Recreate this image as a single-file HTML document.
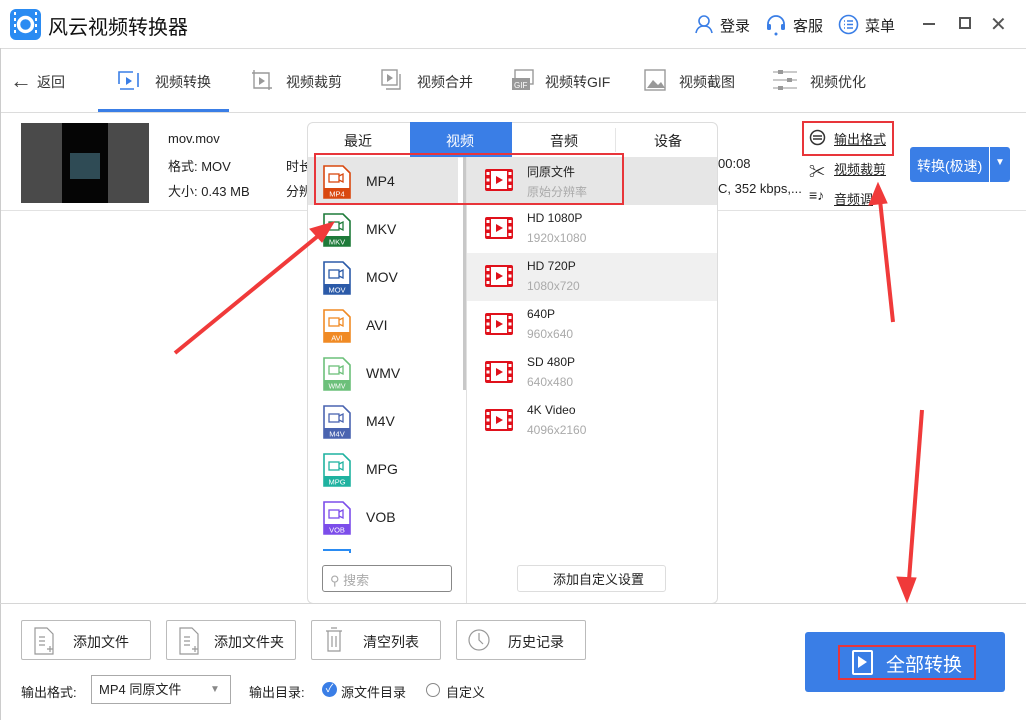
<!DOCTYPE html>
<html><head><meta charset="utf-8"><style>
*{margin:0;padding:0;box-sizing:border-box}
body{width:1026px;height:720px;position:relative;background:#fff;font-family:"Liberation Sans","Noto Sans CJK SC",sans-serif;color:#222;overflow:hidden}
.a{position:absolute;white-space:nowrap}
.hl{position:absolute;left:0;width:1026px;height:1px;background:#dcdcdc}
.nav{font-size:14px;color:#333;top:72px}
.fi{position:absolute;left:323px;width:28px;height:34px}
.fl{position:absolute;left:366px;font-size:14px;color:#222}
.rv{position:absolute;left:485px;width:28px;height:22px}
.rt{position:absolute;left:527px;font-size:12px;color:#222}
.rs{position:absolute;left:527px;font-size:12px;color:#aaa}
.btn{position:absolute;top:620px;width:130px;height:40px;border:1px solid #bbb;border-radius:2px;font-size:14px;color:#222}
</style></head><body>
<!-- title -->
<svg class="a" style="left:10px;top:9px" width="31" height="31" viewBox="0 0 31 31"><rect width="31" height="31" rx="6" fill="#2a8bf2"/><rect x="4" y="3" width="2" height="3" fill="#fff"/><rect x="4" y="9" width="2" height="3" fill="#fff"/><rect x="4" y="15" width="2" height="3" fill="#fff"/><rect x="4" y="21" width="2" height="3" fill="#fff"/><rect x="25" y="3" width="2" height="3" fill="#fff"/><rect x="25" y="9" width="2" height="3" fill="#fff"/><rect x="25" y="15" width="2" height="3" fill="#fff"/><rect x="25" y="21" width="2" height="3" fill="#fff"/><circle cx="15.5" cy="15.5" r="7" fill="none" stroke="#fff" stroke-width="3.5"/></svg>
<div class="a" style="left:48px;top:11px;font-size:20px;color:#111">风云视频转换器</div>
<svg class="a" style="left:694px;top:14px" width="20" height="20" viewBox="0 0 20 20"><circle cx="10" cy="7" r="5" fill="none" stroke="#3a7ee6" stroke-width="1.6"/><path d="M2 19c1-5 4-7 8-7s7 2 8 7" fill="none" stroke="#3a7ee6" stroke-width="1.6"/></svg>
<div class="a" style="left:720px;top:15px;font-size:15px">登录</div>
<svg class="a" style="left:765px;top:14px" width="22" height="22" viewBox="0 0 22 22"><path d="M3 13V10a8 8 0 0 1 16 0v3" fill="none" stroke="#3a7ee6" stroke-width="1.8"/><rect x="2" y="10" width="4" height="6" rx="1.5" fill="#3a7ee6"/><rect x="16" y="10" width="4" height="6" rx="1.5" fill="#3a7ee6"/><circle cx="11" cy="20" r="1.5" fill="#3a7ee6"/></svg>
<div class="a" style="left:793px;top:15px;font-size:15px">客服</div>
<svg class="a" style="left:838px;top:14px" width="21" height="21" viewBox="0 0 21 21"><circle cx="10.5" cy="10.5" r="9" fill="none" stroke="#3a7ee6" stroke-width="1.6"/><path d="M6 7h1M9 7h6M6 10.5h1M9 10.5h6M6 14h1M9 14h6" stroke="#3a7ee6" stroke-width="1.6"/></svg>
<div class="a" style="left:865px;top:15px;font-size:15px">菜单</div>
<div class="a" style="left:923px;top:23px;width:12px;height:2px;background:#555"></div>
<div class="a" style="left:959px;top:17px;width:12px;height:12px;border:2px solid #555"></div>
<div class="a" style="left:990px;top:12px;font-size:20px;color:#555">✕</div>
<div class="hl" style="top:48px"></div>
<!-- nav -->
<div class="a" style="left:10px;top:68px;font-size:22px;color:#444">←</div>
<div class="a nav" style="left:37px">返回</div>
<svg class="a" style="left:117px;top:68px" width="24" height="26" viewBox="0 0 24 26"><rect x="2" y="4" width="19" height="17" fill="none" stroke="#3a7ee6" stroke-width="1.6" stroke-dasharray="14 6"/><path d="M9 9l6 4-6 4z" fill="#3a7ee6"/></svg>
<div class="a nav" style="left:155px">视频转换</div>
<div class="a" style="left:98px;top:109px;width:131px;height:3px;background:#3a7ee6"></div>
<svg class="a" style="left:250px;top:68px" width="24" height="26" viewBox="0 0 24 26"><path d="M4 2v18h18M2 5h17v17" fill="none" stroke="#999" stroke-width="1.4"/><path d="M9 9l6 4-6 4z" fill="#999"/></svg>
<div class="a nav" style="left:286px">视频裁剪</div>
<svg class="a" style="left:380px;top:68px" width="24" height="26" viewBox="0 0 24 26"><rect x="2" y="2" width="15" height="15" fill="none" stroke="#999" stroke-width="1.4"/><path d="M20 6v15H6" fill="none" stroke="#999" stroke-width="1.4"/><path d="M7 6l6 4-6 4z" fill="#999"/></svg>
<div class="a nav" style="left:417px">视频合并</div>
<svg class="a" style="left:511px;top:68px" width="26" height="26" viewBox="0 0 26 26"><rect x="4" y="2" width="18" height="14" fill="none" stroke="#999" stroke-width="1.4"/><rect x="1" y="10" width="18" height="12" fill="#999"/><text x="3" y="20" font-size="8" fill="#fff" font-family="Liberation Sans">GIF</text></svg>
<div class="a nav" style="left:545px">视频转GIF</div>
<svg class="a" style="left:643px;top:68px" width="24" height="26" viewBox="0 0 24 26"><rect x="2" y="2" width="20" height="20" fill="none" stroke="#999" stroke-width="1.4"/><path d="M4 20l6-8 5 5 3-3 4 6" fill="#999"/></svg>
<div class="a nav" style="left:679px">视频截图</div>
<svg class="a" style="left:772px;top:68px" width="26" height="24" viewBox="0 0 26 24"><path d="M1 4h24M1 12h24M1 20h24" stroke="#aaa" stroke-width="1.2"/><rect x="6" y="2" width="5" height="4" fill="#999"/><rect x="15" y="10" width="5" height="4" fill="#999"/><rect x="6" y="18" width="5" height="4" fill="#999"/></svg>
<div class="a nav" style="left:810px">视频优化</div>
<div class="hl" style="top:112px"></div>
<!-- file row -->
<div class="a" style="left:21px;top:123px;width:128px;height:80px;background:#4a4a4a"></div>
<div class="a" style="left:62px;top:123px;width:46px;height:80px;background:#050505"></div>
<div class="a" style="left:70px;top:153px;width:30px;height:26px;background:#2f4b55"></div>
<div class="a" style="left:168px;top:131px;font-size:13px">mov.mov</div>
<div class="a" style="left:168px;top:156px;font-size:13px">格式: MOV</div>
<div class="a" style="left:168px;top:181px;font-size:13px">大小: 0.43 MB</div>
<div class="a" style="left:286px;top:156px;font-size:13px">时长</div>
<div class="a" style="left:286px;top:181px;font-size:13px">分辨</div>
<div class="a" style="left:718px;top:156px;font-size:13px">00:08</div>
<div class="a" style="left:718px;top:181px;font-size:13px">C, 352 kbps,...</div>
<svg class="a" style="left:809px;top:129px" width="17" height="17" viewBox="0 0 17 17"><circle cx="8.5" cy="8.5" r="7" fill="none" stroke="#333" stroke-width="1.5"/><path d="M4 7h9M4 10h9" stroke="#333" stroke-width="1.5"/></svg>
<div class="a" style="left:834px;top:129px;font-size:13px;text-decoration:underline">输出格式</div>
<div class="a" style="left:809px;top:158px;font-size:16px">✂</div>
<div class="a" style="left:834px;top:159px;font-size:13px;text-decoration:underline">视频裁剪</div>
<div class="a" style="left:809px;top:187px;font-size:14px">≡♪</div>
<div class="a" style="left:834px;top:189px;font-size:13px;text-decoration:underline">音频调</div>
<div class="a" style="left:802px;top:121px;width:92px;height:35px;border:2px solid #e8353a"></div>
<div class="a" style="left:910px;top:147px;width:100px;height:35px;background:#3a7ee6;border-radius:3px"></div>
<div class="a" style="left:917px;top:156px;font-size:14px;color:#fff">转换(极速)</div>
<div class="a" style="left:989px;top:147px;width:1px;height:35px;background:#fff"></div>
<div class="a" style="left:995px;top:157px;font-size:10px;color:#fff">▼</div>
<div class="hl" style="top:210px;background:#e2e2e2"></div>
<div class="a" style="left:0;top:48px;width:1px;height:672px;background:#ccc"></div>
<!-- popup -->
<div class="a" style="left:307px;top:122px;width:411px;height:482px;background:#fff;border:1px solid #ddd;border-radius:6px"></div>
<div class="a" style="left:410px;top:122px;width:102px;height:35px;background:#3a7ee6"></div>
<div class="a" style="left:344px;top:131px;font-size:14px">最近</div>
<div class="a" style="left:446px;top:131px;font-size:14px;color:#fff">视频</div>
<div class="a" style="left:550px;top:131px;font-size:14px">音频</div>
<div class="a" style="left:654px;top:131px;font-size:14px">设备</div>
<div class="a" style="left:615px;top:128px;width:1px;height:24px;background:#e5e5e5"></div>
<div class="a" style="left:308px;top:157px;width:409px;height:1px;background:#eee"></div>
<div class="a" style="left:466px;top:157px;width:1px;height:446px;background:#e0e0e0"></div>
<div class="a" style="left:463px;top:157px;width:3px;height:233px;background:#c8c8c8"></div>
<div class="a" style="left:308px;top:157px;width:150px;height:48px;background:#e6e6e6"></div>
<div class="a" style="left:467px;top:157px;width:250px;height:48px;background:#e6e6e6"></div>
<div class="a" style="left:467px;top:253px;width:250px;height:48px;background:#f0f0f0"></div>
<svg width="0" height="0" style="position:absolute"><defs>
<symbol id="cam" viewBox="0 0 28 34"><rect x="6" y="8" width="10" height="8" fill="none" stroke="#fff" stroke-width="1.3"/><path d="M16 10l4-2v8l-4-2" fill="none" stroke="#fff" stroke-width="1.3"/></symbol>
<symbol id="film" viewBox="0 0 28 22"><rect x="0" y="0" width="28" height="22" rx="2" fill="#e0111b"/><rect x="6" y="2" width="16" height="18" fill="#fff"/><path d="M11 7l7 4-7 4z" fill="#e0111b"/><rect x="1.5" y="3" width="3" height="3" fill="#fff"/><rect x="1.5" y="9.5" width="3" height="3" fill="#fff"/><rect x="1.5" y="16" width="3" height="3" fill="#fff"/><rect x="23.5" y="3" width="3" height="3" fill="#fff"/><rect x="23.5" y="9.5" width="3" height="3" fill="#fff"/><rect x="23.5" y="16" width="3" height="3" fill="#fff"/></symbol>
</defs></svg>
<!-- file icons -->
<svg class="fi" style="top:165px" viewBox="0 0 28 34"><path d="M1 1h19l7 7v25H1z" fill="#fff" stroke="#d9480f" stroke-width="1.6"/><rect x="1" y="23" width="26" height="10" fill="#d9480f"/><rect x="6" y="9" width="10" height="8" fill="none" stroke="#d9480f" stroke-width="1.3"/><path d="M16 11l4-2v8l-4-2" fill="none" stroke="#d9480f" stroke-width="1.3"/><text x="14" y="31.5" font-size="7.5" fill="#fff" text-anchor="middle" font-family="Liberation Sans">MP4</text></svg>
<svg class="fi" style="top:213px" viewBox="0 0 28 34"><path d="M1 1h19l7 7v25H1z" fill="#fff" stroke="#1e7b3a" stroke-width="1.6"/><rect x="1" y="23" width="26" height="10" fill="#1e7b3a"/><rect x="6" y="9" width="10" height="8" fill="none" stroke="#1e7b3a" stroke-width="1.3"/><path d="M16 11l4-2v8l-4-2" fill="none" stroke="#1e7b3a" stroke-width="1.3"/><text x="14" y="31.5" font-size="7.5" fill="#fff" text-anchor="middle" font-family="Liberation Sans">MKV</text></svg>
<svg class="fi" style="top:261px" viewBox="0 0 28 34"><path d="M1 1h19l7 7v25H1z" fill="#fff" stroke="#2b5aa8" stroke-width="1.6"/><rect x="1" y="23" width="26" height="10" fill="#2b5aa8"/><rect x="6" y="9" width="10" height="8" fill="none" stroke="#2b5aa8" stroke-width="1.3"/><path d="M16 11l4-2v8l-4-2" fill="none" stroke="#2b5aa8" stroke-width="1.3"/><text x="14" y="31.5" font-size="7.5" fill="#fff" text-anchor="middle" font-family="Liberation Sans">MOV</text></svg>
<svg class="fi" style="top:309px" viewBox="0 0 28 34"><path d="M1 1h19l7 7v25H1z" fill="#fff" stroke="#f08a24" stroke-width="1.6"/><rect x="1" y="23" width="26" height="10" fill="#f08a24"/><rect x="6" y="9" width="10" height="8" fill="none" stroke="#f08a24" stroke-width="1.3"/><path d="M16 11l4-2v8l-4-2" fill="none" stroke="#f08a24" stroke-width="1.3"/><text x="14" y="31.5" font-size="7.5" fill="#fff" text-anchor="middle" font-family="Liberation Sans">AVI</text></svg>
<svg class="fi" style="top:357px" viewBox="0 0 28 34"><path d="M1 1h19l7 7v25H1z" fill="#fff" stroke="#6cc07a" stroke-width="1.6"/><rect x="1" y="23" width="26" height="10" fill="#6cc07a"/><rect x="6" y="9" width="10" height="8" fill="none" stroke="#6cc07a" stroke-width="1.3"/><path d="M16 11l4-2v8l-4-2" fill="none" stroke="#6cc07a" stroke-width="1.3"/><text x="14" y="31.5" font-size="7" fill="#fff" text-anchor="middle" font-family="Liberation Sans">WMV</text></svg>
<svg class="fi" style="top:405px" viewBox="0 0 28 34"><path d="M1 1h19l7 7v25H1z" fill="#fff" stroke="#4a64b0" stroke-width="1.6"/><rect x="1" y="23" width="26" height="10" fill="#4a64b0"/><rect x="6" y="9" width="10" height="8" fill="none" stroke="#4a64b0" stroke-width="1.3"/><path d="M16 11l4-2v8l-4-2" fill="none" stroke="#4a64b0" stroke-width="1.3"/><text x="14" y="31.5" font-size="7.5" fill="#fff" text-anchor="middle" font-family="Liberation Sans">M4V</text></svg>
<svg class="fi" style="top:453px" viewBox="0 0 28 34"><path d="M1 1h19l7 7v25H1z" fill="#fff" stroke="#1fb2a0" stroke-width="1.6"/><rect x="1" y="23" width="26" height="10" fill="#1fb2a0"/><rect x="6" y="9" width="10" height="8" fill="none" stroke="#1fb2a0" stroke-width="1.3"/><path d="M16 11l4-2v8l-4-2" fill="none" stroke="#1fb2a0" stroke-width="1.3"/><text x="14" y="31.5" font-size="7.5" fill="#fff" text-anchor="middle" font-family="Liberation Sans">MPG</text></svg>
<svg class="fi" style="top:501px" viewBox="0 0 28 34"><path d="M1 1h19l7 7v25H1z" fill="#fff" stroke="#7c4dea" stroke-width="1.6"/><rect x="1" y="23" width="26" height="10" fill="#7c4dea"/><rect x="6" y="9" width="10" height="8" fill="none" stroke="#7c4dea" stroke-width="1.3"/><path d="M16 11l4-2v8l-4-2" fill="none" stroke="#7c4dea" stroke-width="1.3"/><text x="14" y="31.5" font-size="7.5" fill="#fff" text-anchor="middle" font-family="Liberation Sans">VOB</text></svg>
<div class="a" style="left:323px;top:549px;width:28px;height:4px;border-top:2px solid #2a8bf2;border-right:2px solid #2a8bf2"></div>
<div class="fl" style="top:173px">MP4</div>
<div class="fl" style="top:221px">MKV</div>
<div class="fl" style="top:269px">MOV</div>
<div class="fl" style="top:317px">AVI</div>
<div class="fl" style="top:365px">WMV</div>
<div class="fl" style="top:413px">M4V</div>
<div class="fl" style="top:461px">MPG</div>
<div class="fl" style="top:509px">VOB</div>
<!-- right list -->
<svg class="rv" style="top:169px"><use href="#film"/></svg>
<svg class="rv" style="top:217px"><use href="#film"/></svg>
<svg class="rv" style="top:265px"><use href="#film"/></svg>
<svg class="rv" style="top:313px"><use href="#film"/></svg>
<svg class="rv" style="top:361px"><use href="#film"/></svg>
<svg class="rv" style="top:409px"><use href="#film"/></svg>
<div class="rt" style="top:163px">同原文件</div><div class="rs" style="top:183px">原始分辨率</div>
<div class="rt" style="top:211px">HD 1080P</div><div class="rs" style="top:231px">1920x1080</div>
<div class="rt" style="top:259px">HD 720P</div><div class="rs" style="top:279px">1080x720</div>
<div class="rt" style="top:307px">640P</div><div class="rs" style="top:327px">960x640</div>
<div class="rt" style="top:355px">SD 480P</div><div class="rs" style="top:375px">640x480</div>
<div class="rt" style="top:403px">4K Video</div><div class="rs" style="top:423px">4096x2160</div>
<div class="a" style="left:314px;top:153px;width:310px;height:52px;border:2px solid #e8353a"></div>
<div class="a" style="left:322px;top:565px;width:130px;height:27px;border:1px solid #888;border-radius:3px"></div>
<div class="a" style="left:330px;top:570px;font-size:13px;color:#aaa">⚲ 搜索</div>
<div class="a" style="left:517px;top:565px;width:149px;height:27px;border:1px solid #ddd;border-radius:3px;font-size:13px;line-height:27px;padding-left:35px">添加自定义设置</div>
<!-- bottom -->
<div class="hl" style="top:603px;background:#d6d6d6"></div>
<div class="btn" style="left:21px"><span class="a" style="left:51px;top:11px">添加文件</span></div>
<div class="btn" style="left:166px"><span class="a" style="left:47px;top:11px">添加文件夹</span></div>
<div class="btn" style="left:311px"><span class="a" style="left:51px;top:11px">清空列表</span></div>
<div class="btn" style="left:456px"><span class="a" style="left:51px;top:11px">历史记录</span></div>
<svg class="a" style="left:34px;top:627px" width="20" height="28" viewBox="0 0 20 28"><path d="M1 1h12l6 6v20H1z" fill="none" stroke="#999" stroke-width="1.2"/><path d="M5 10h6M5 14h6M5 18h6M13 22h6M16 19v6" stroke="#999" stroke-width="1.2"/></svg>
<svg class="a" style="left:179px;top:627px" width="20" height="28" viewBox="0 0 20 28"><path d="M1 1h12l6 6v20H1z" fill="none" stroke="#999" stroke-width="1.2"/><path d="M5 10h6M5 14h6M5 18h6M13 22h6M16 19v6" stroke="#999" stroke-width="1.2"/></svg>
<svg class="a" style="left:325px;top:627px" width="18" height="26" viewBox="0 0 18 26"><path d="M1 4h16M6 1h6M3 4v20h12V4M7 9v11M11 9v11" fill="none" stroke="#999" stroke-width="1.2"/></svg>
<svg class="a" style="left:467px;top:628px" width="24" height="24" viewBox="0 0 24 24"><circle cx="12" cy="12" r="10" fill="none" stroke="#999" stroke-width="1.2"/><path d="M12 5v7l4 4" fill="none" stroke="#999" stroke-width="1.2"/></svg>
<div class="a" style="left:21px;top:682px;font-size:13px">输出格式:</div>
<div class="a" style="left:91px;top:675px;width:140px;height:29px;border:1px solid #aaa;font-size:13px;line-height:27px;padding-left:7px">MP4 同原文件<span class="a" style="left:118px;top:0;color:#888;font-size:10px">▼</span></div>
<div class="a" style="left:249px;top:682px;font-size:13px">输出目录:</div>
<div class="a" style="left:322px;top:682px;width:15px;height:15px;border-radius:50%;background:#3a7ee6;color:#fff;font-size:11px;line-height:15px;text-align:center">✓</div>
<div class="a" style="left:341px;top:682px;font-size:13px">源文件目录</div>
<div class="a" style="left:426px;top:683px;width:14px;height:14px;border-radius:50%;border:1px solid #888"></div>
<div class="a" style="left:446px;top:682px;font-size:13px">自定义</div>
<div class="a" style="left:805px;top:632px;width:200px;height:60px;background:#3a7ee6;border-radius:3px"></div>
<div class="a" style="left:838px;top:645px;width:138px;height:35px;border:2px solid #e8353a"></div>
<div class="a" style="left:852px;top:650px;width:21px;height:25px;border:2px solid #fff;border-radius:2px"></div>
<div class="a" style="left:858px;top:656px;width:0;height:0;border-left:9px solid #fff;border-top:6px solid transparent;border-bottom:6px solid transparent"></div>
<div class="a" style="left:886px;top:650px;font-size:19px;color:#fff">全部转换</div>
<!-- arrows -->
<svg class="a" style="left:0;top:0" width="1026" height="720"><g fill="#f03a3a" stroke="#f03a3a"><path d="M175 353L318 236" stroke-width="4"/><path d="M334 222l-24 7 12 13z"/><path d="M893 322L880 200" stroke-width="4"/><path d="M878 183l-9 22 18-2z"/><path d="M922 410L909 580" stroke-width="4"/><path d="M907 602l-10-25 19 1z"/></g></svg>
</body></html>
